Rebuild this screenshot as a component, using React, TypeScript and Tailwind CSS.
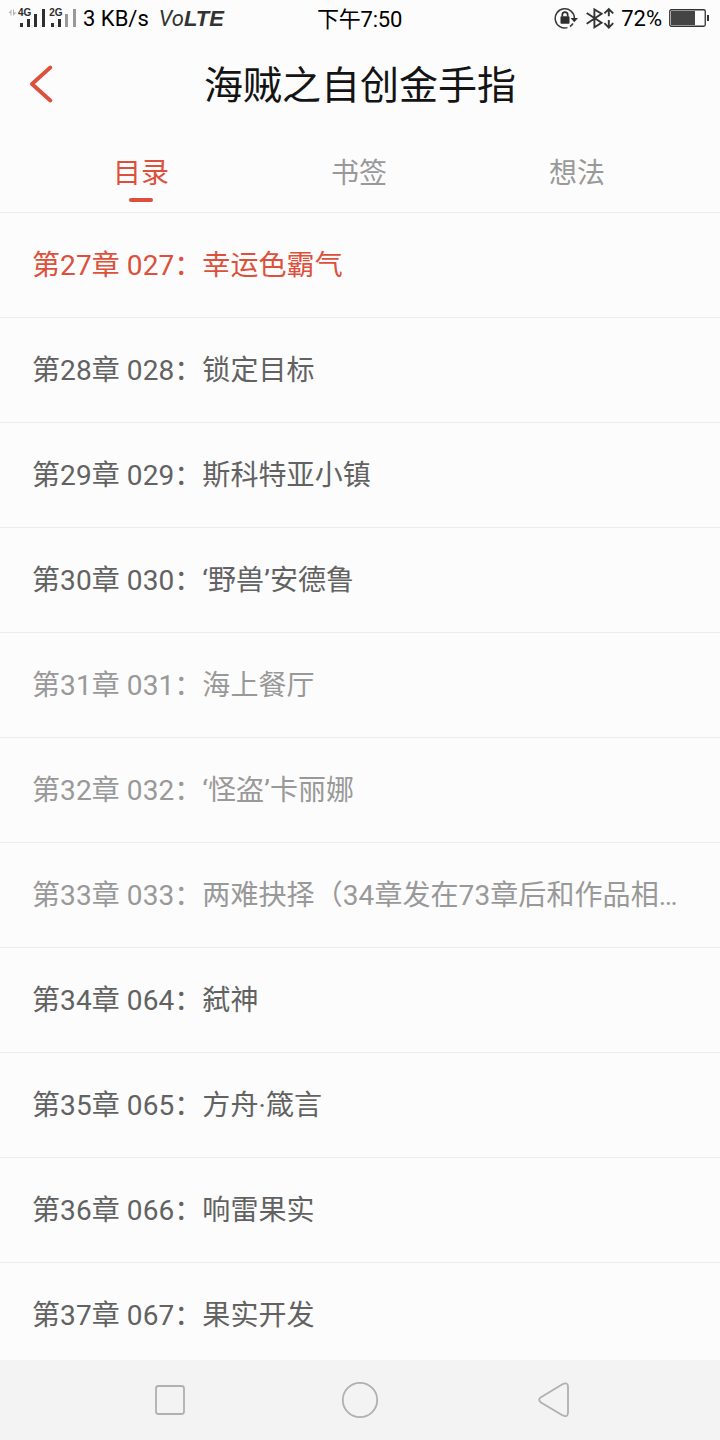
type Chapter = {
  name: string;
  state?: "current" | "locked";
};

const tabs = ["目录", "书签", "想法"];

const chapters: Chapter[] = [
  { name: "第27章 027：幸运色霸气", state: "current" },
  { name: "第28章 028：锁定目标" },
  { name: "第29章 029：斯科特亚小镇" },
  { name: "第30章 030：‘野兽’安德鲁" },
  { name: "第31章 031：海上餐厅", state: "locked" },
  { name: "第32章 032：‘怪盗’卡丽娜", state: "locked" },
  { name: "第33章 033：两难抉择（34章发在73章后和作品相…", state: "locked" },
  { name: "第34章 064：弑神" },
  { name: "第35章 065：方舟·箴言" },
  { name: "第36章 066：响雷果实" },
  { name: "第37章 067：果实开发" },
];

const chapterColor = (state: Chapter["state"]) => {
  if (state === "current") return "text-[#dd503b]";
  if (state === "locked") return "text-[#999999]";
  return "text-[#626262]";
};

const SignalIcon = () => (
  <svg width="68" height="18" viewBox="0 0 68 18" className="shrink-0 overflow-visible">
    <path d="M-0.5 4 2.5 0.5V6.5H1.5V4zM4 0.5H5V3.5H7.5L4 7z" fill="#b4b4b4" />
    <g fill="#2e2e2e">
      <rect x="11" y="14" width="3" height="4" />
      <rect x="18" y="10" width="3" height="8" />
      <rect x="25" y="5" width="3" height="13" />
      <rect x="33" y="0" width="3" height="18" />
      <rect x="42" y="14" width="3" height="4" />
      <rect x="49" y="10" width="3" height="8" />
    </g>
    <g fill="#999999">
      <rect x="56" y="5" width="3" height="13" />
      <rect x="64" y="0" width="3" height="18" />
    </g>
    <g fill="#2e2e2e" fontFamily="Liberation Sans" fontWeight="700" fontSize="10">
      <text x="9" y="7.3">4G</text>
      <text x="40.3" y="7.3">2G</text>
    </g>
  </svg>
);

const RotationLockIcon = () => (
  <svg width="24" height="22" viewBox="0 0 24 22" fill="none">
    <path d="M13.5 20.6A9.6 9.6 0 1 1 20.4 11" stroke="#3a3a3a" strokeWidth="1.5" />
    <path d="M16 19.5A9.6 9.6 0 0 0 19 16.5" stroke="#3a3a3a" strokeWidth="1.5" />
    <path d="M16.6 11H24L20.3 15.2z" fill="#2e2e2e" />
    <rect x="6.5" y="9.3" width="9" height="7.4" rx="0.8" fill="#2e2e2e" />
    <path d="M8.3 9.5V7.8a2.7 2.7 0 0 1 5.4 0V9.5" stroke="#2e2e2e" strokeWidth="1.7" />
  </svg>
);

const BluetoothIcon = () => (
  <svg
    width="28"
    height="22"
    viewBox="0 0 28 22"
    fill="none"
    stroke="#333333"
    strokeWidth="1.9"
  >
    <path d="M0.7 6 15.6 15.8 8.4 20.2V2.4L15.6 6.8 0.7 16.8" />
    <path d="M22.8 2.2V9.2M18.4 6.4 22.8 2 27.2 6.4" />
    <path d="M22.8 13V20.4M18.4 16.2 22.8 20.6 27.2 16.2" />
  </svg>
);

const StatusBar = () => (
  <div className="grid h-9 grid-cols-[1fr_auto_1fr] items-center pl-[9px] pr-[11px] text-[22px] leading-8 text-black">
    <div className="flex items-center">
      <SignalIcon />
      <span className="ml-[6px] pt-[2px] whitespace-nowrap">3 KB/s</span>
      <span className="ml-[10px] pt-[2px] italic text-[#333333]">
        Vo<b className="font-['Liberation_Sans']">LTE</b>
      </span>
    </div>
    <span className="pt-1 pl-px tracking-[-0.2px]">下午7:50</span>
    <div className="flex items-center justify-end">
      <RotationLockIcon />
      <div className="ml-2">
        <BluetoothIcon />
      </div>
      <span className="ml-[7px] pt-px">72%</span>
      <svg width="40" height="18" viewBox="0 0 40 18" className="ml-[7px]">
        <rect x="0.75" y="0.75" width="35.5" height="16.5" rx="1.5" fill="none" stroke="#333333" strokeWidth="1.3" />
        <rect x="2" y="2" width="24" height="14" fill="#444444" />
        <rect x="38" y="6" width="2" height="6" fill="#333333" />
      </svg>
    </div>
  </div>
);

const Header = () => (
  <header className="grid h-24 grid-cols-[1fr_auto_1fr] items-center px-[30px]">
    <svg
      width="24"
      height="38"
      viewBox="0 0 24 38"
      fill="none"
      stroke="#dd503b"
      strokeWidth="3.8"
      strokeLinecap="round"
      strokeLinejoin="round"
    >
      <path d="M20.3 2.5 2 19 20.3 35.5" />
    </svg>
    <h1 className="pt-1 text-[39px] leading-none text-[#141414]">海贼之自创金手指</h1>
  </header>
);

const Tabs = () => (
  <nav className="flex h-[81px] border-b border-[#ececec] pr-[34px] pl-8 text-[28px]">
    {tabs.map((tab, i) => (
      <div
        key={tab}
        className={`flex flex-1 flex-col items-center pt-[21px] ${
          i === 0 ? "text-[#dd503b]" : "text-[#999999]"
        }`}
      >
        <span className="leading-[42px]">{tab}</span>
        {i === 0 && <span className="mt-[3px] h-1 w-6 rounded-full bg-[#dd503b]" />}
      </div>
    ))}
  </nav>
);

const NavBar = () => (
  <footer className="h-20 shrink-0 bg-[#f3f3f3]">
    <svg width="720" height="80" viewBox="0 0 720 80" fill="none" stroke="#b0b0b0" strokeWidth="1.8">
      <rect x="156" y="26" width="28" height="28" rx="2.5" />
      <circle cx="360" cy="40" r="17.2" />
      <path d="M540.6 37.4 562.4 24.2Q568 21.5 568 27V52.5Q568 58 562.4 55.3L540.6 42.2Q537.8 39.8 540.6 37.4Z" />
    </svg>
  </footer>
);

const App = () => {
  return (
    <div className="flex h-screen w-[720px] flex-col overflow-hidden bg-[#fcfcfc] font-[Roboto,'Noto_Sans_CJK_SC',sans-serif]">
      <StatusBar />
      <Header />
      <Tabs />
      <ul className="min-h-0 flex-1 overflow-hidden">
        {chapters.map(({ name, state }) => (
          <li
            key={name}
            className={`flex h-[105px] items-center border-b border-[#ececec] px-8 pt-px text-[28px] tracking-[0.08px] whitespace-nowrap ${chapterColor(state)}`}
          >
            {name}
          </li>
        ))}
      </ul>
      <NavBar />
    </div>
  );
};

export default App;
